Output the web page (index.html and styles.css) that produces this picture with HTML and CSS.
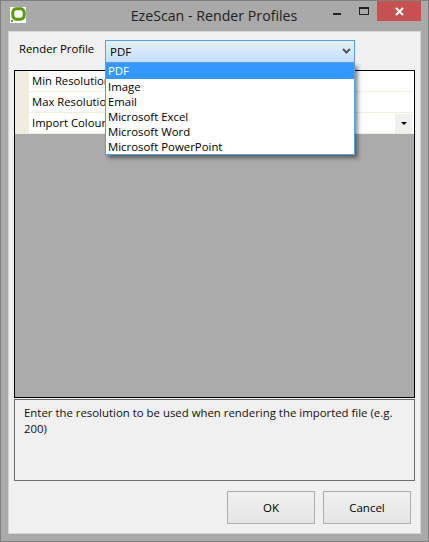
FILE: index.html
```html
<!DOCTYPE html>
<html lang="en">
<head>
    <meta charset="UTF-8">
    <title>EzeScan - Render Profiles</title>
    <link rel="stylesheet" href="styles.css">
</head>
<body>
    <div class="window">
        <div class="title-bar">
            <svg class="app-icon" width="16" height="16" viewBox="0 0 16 16">
                <rect width="16" height="16" fill="#fff"/>
                <rect x="2.8" y="1.8" width="11.4" height="10.4" rx="3.6" fill="none" stroke="#5a9a0c" stroke-width="3"/>
                <rect x="1" y="13" width="2" height="2" fill="#5a9a0c"/>
            </svg>
            <p class="title">EzeScan - Render Profiles</p>
            <div class="win-buttons">
                <span class="min-glyph"></span>
                <span class="max-glyph"></span>
                <div class="win-close">
                    <svg width="9" height="9" viewBox="0 0 9 9"><path d="M1 1l7 7M8 1l-7 7" stroke="#fff" stroke-width="2" fill="none"/></svg>
                </div>
            </div>
        </div>
        <div class="client">
            <div class="profile-row">
                <label class="profile-label">Render Profile</label>
                <div class="combo-wrap">
                    <div class="combo">
                        <span>PDF</span>
                        <svg width="9" height="7" viewBox="0 0 9 7"><path d="M1 1l3.5 3.5L8 1" stroke="#555" stroke-width="2" fill="none"/></svg>
                    </div>
                    <ul class="combo-list">
                        <li class="selected">PDF</li>
                        <li>Image</li>
                        <li>Email</li>
                        <li>Microsoft Excel</li>
                        <li>Microsoft Word</li>
                        <li>Microsoft PowerPoint</li>
                    </ul>
                </div>
            </div>
            <div class="grid">
                <div class="grid-row">
                    <div class="gutter"></div>
                    <div class="cell">Min Resolution</div>
                </div>
                <div class="grid-row">
                    <div class="gutter"></div>
                    <div class="cell">Max Resolution</div>
                </div>
                <div class="grid-row">
                    <div class="gutter"></div>
                    <div class="cell">Import Colour</div>
                    <div class="cell-drop"><span class="drop-arrow"></span></div>
                </div>
            </div>
            <div class="help-box">Enter the resolution to be used when rendering the imported file (e.g. 200)</div>
            <div class="actions">
                <button class="btn">OK</button>
                <button class="btn">Cancel</button>
            </div>
        </div>
    </div>
</body>
</html>
```

FILE: styles.css
```css
*{
    margin: 0;
    padding: 0;
    box-sizing: border-box;
}

html, body{
    height: 100%;
    overflow: hidden;
}

body{
    font-family: 'Open Sans', 'Noto Sans', sans-serif;
    font-size: 11.3px;
    color: #000;
    background-color: #a9a9a9;
}

.window{
    height: 542px;
    display: flex;
    flex-direction: column;
    border: 1px solid #7f7f7f;
    background-color: #a9a9a9;
}

.title-bar{
    height: 30px;
    display: flex;
    align-items: flex-start;
}

.app-icon{
    margin: 6px 0 0 9px;
}

.title{
    flex: 1;
    font-size: 14.2px;
    line-height: 20px;
    margin-top: 5px;
    padding-left: 69px;
    text-align: center;
    color: #222;
}

.win-buttons{
    display: flex;
    align-items: flex-start;
    margin-right: 7px;
}

.min-glyph{
    width: 8px;
    height: 2px;
    margin: 12px 18px 0 0;
    background-color: #222;
}

.max-glyph{
    width: 10px;
    height: 8px;
    margin: 6px 8px 0 0;
    border: 1px solid #222;
    border-top-width: 2px;
}

.win-close{
    width: 44px;
    height: 20px;
    background-color: #c75050;
    display: flex;
    align-items: center;
    justify-content: center;
}

.client{
    flex: 1;
    margin: 0 7px 7px 7px;
    background-color: #f0f0f0;
    border: 1px solid #d4d4d4;
    padding: 8px 5px 9px 5px;
    display: flex;
    flex-direction: column;
}

.profile-row{
    display: flex;
    height: 23px;
}

.profile-label{
    width: 91px;
    padding-left: 5px;
    line-height: 17px;
}

.combo-wrap{
    width: 250px;
    position: relative;
}

.combo{
    height: 23px;
    border: 1px solid #5b9fe0;
    background: linear-gradient(#e3f0fc, #c4dff8);
    display: flex;
    align-items: center;
    justify-content: space-between;
    padding: 0 3px 0 4px;
    font-size: 11.5px;
}

.combo-list{
    position: absolute;
    top: 23px;
    left: 0;
    width: 250px;
    height: 92px;
    list-style: none;
    font-size: 11.4px;
    background-color: #fff;
    border: 1px solid #5b9fe0;
    border-top: 0;
    box-shadow: 3px 3px 4px rgba(0, 0, 0, 0.45);
    z-index: 2;
}

.combo-list li{
    height: 15px;
    line-height: 15px;
    padding-left: 2px;
}

.combo-list li.selected{
    height: 16px;
    line-height: 16px;
    background-color: #3399ff;
    color: #fff;
}

.grid{
    flex: 1;
    margin-top: 7px;
    background-color: #ababab;
    border: 1px solid #000;
}

.grid-row{
    height: 21px;
    display: flex;
    background-color: #fff;
    border-bottom: 1px solid #f0ede0;
}

.gutter{
    width: 14px;
    background-color: #f0ede0;
}

.cell{
    flex: 1;
    padding-left: 3px;
    line-height: 19px;
}

.cell-drop{
    width: 17px;
    height: 19px;
    margin: 1px 2px 0 0;
    background-color: #f0f0f0;
    display: flex;
    align-items: center;
    justify-content: center;
}

.drop-arrow{
    width: 0;
    height: 0;
    border-left: 3px solid transparent;
    border-right: 3px solid transparent;
    border-top: 3px solid #000;
}

.help-box{
    height: 82px;
    margin-top: 1px;
    border: 1px solid #6d6d6d;
    padding: 5px 9px;
    font-size: 11.4px;
    line-height: 15.5px;
    color: #111;
}

.actions{
    display: flex;
    justify-content: flex-end;
    gap: 8px;
    margin-top: 10px;
    padding-right: 4px;
}

.btn{
    width: 88px;
    height: 33px;
    border: 1px solid #adadad;
    background: linear-gradient(#f0f0f0, #e5e5e5);
    font-family: inherit;
    font-size: 11.5px;
    color: #000;
}
```
